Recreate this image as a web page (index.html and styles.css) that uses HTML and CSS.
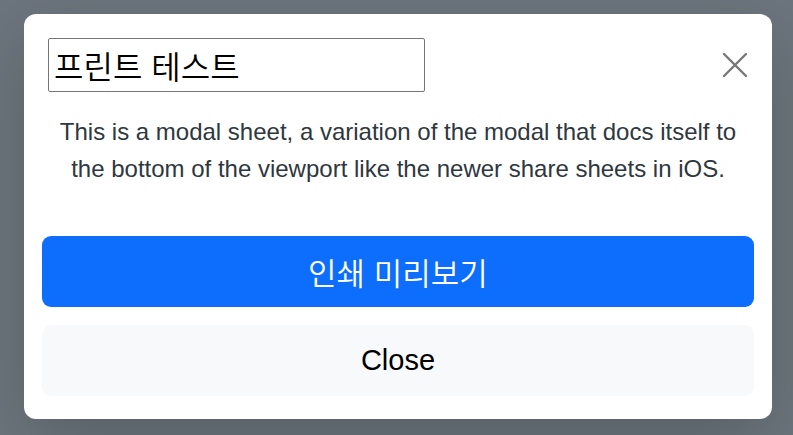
FILE: index.html
```html
<!DOCTYPE html>
<html lang="ko">
<head>
<meta charset="utf-8">
<link rel="stylesheet" href="styles.css">
</head>
<body>
<div class="page">
  <div class="modal">
    <div class="modal-header">
      <input class="title-input" type="text" value="프린트 테스트">
      <button class="btn-close" aria-label="Close">
        <svg width="24" height="24" viewBox="0 0 24 24"><path d="M1 1 L23 23 M23 1 L1 23" stroke="#777" stroke-width="2.4" stroke-linecap="round" fill="none"/></svg>
      </button>
    </div>
    <p class="modal-text">This is a modal sheet, a variation of the modal that docs itself to the bottom of the viewport like the newer share sheets in iOS.</p>
    <div class="modal-footer">
      <button class="btn btn-primary">인쇄 미리보기</button>
      <button class="btn btn-light">Close</button>
    </div>
  </div>
</div>
</body>
</html>
```
FILE: styles.css
```css
* { box-sizing: border-box; }
html, body { margin: 0; height: 100%; }
body {
  background: #6c757d;
  font-family: "Liberation Sans", Arial, sans-serif;
}
.page {
  padding: 14px 21px 0 24px;
}
.modal {
  width: 748px;
  height: 405px;
  background: #fff;
  border-radius: 12px;
  box-shadow: 0 24px 72px rgba(0,0,0,0.175);
  display: flex;
  flex-direction: column;
}
.modal-header {
  display: flex;
  align-items: center;
  justify-content: space-between;
  padding: 24px 25px 0 24px;
}
.title-input {
  width: 377px;
  height: 54px;
  border: 1px solid #767676;
  border-radius: 2px;
  padding: 0 5px;
  font-family: "Noto Sans CJK KR", sans-serif;
  font-size: 32px;
  font-weight: 350;
  color: #000;
  outline: none;
}
.btn-close {
  width: 24px;
  height: 24px;
  padding: 0;
  border: 0;
  background: transparent;
  display: flex;
}
.modal-text {
  margin: 21px 0 0;
  padding: 0 24px;
  text-align: center;
  font-size: 24px;
  line-height: 37px;
  color: #2f3740;
}
.modal-footer {
  display: flex;
  flex-direction: column;
  gap: 18px;
  padding: 0 18px;
  margin-top: 49px;
}
.btn {
  height: 71px;
  border: 0;
  border-radius: 9px;
  font-size: 29px;
  font-family: "Liberation Sans", "Noto Sans CJK KR", sans-serif;
}
.btn-primary {
  background: #0d6efd;
  color: #fff;
  font-size: 31px;
  font-weight: 350;
  font-family: "Noto Sans CJK KR", sans-serif;
}
.btn-light {
  background: #f8f9fa;
  color: #000;
}
```
